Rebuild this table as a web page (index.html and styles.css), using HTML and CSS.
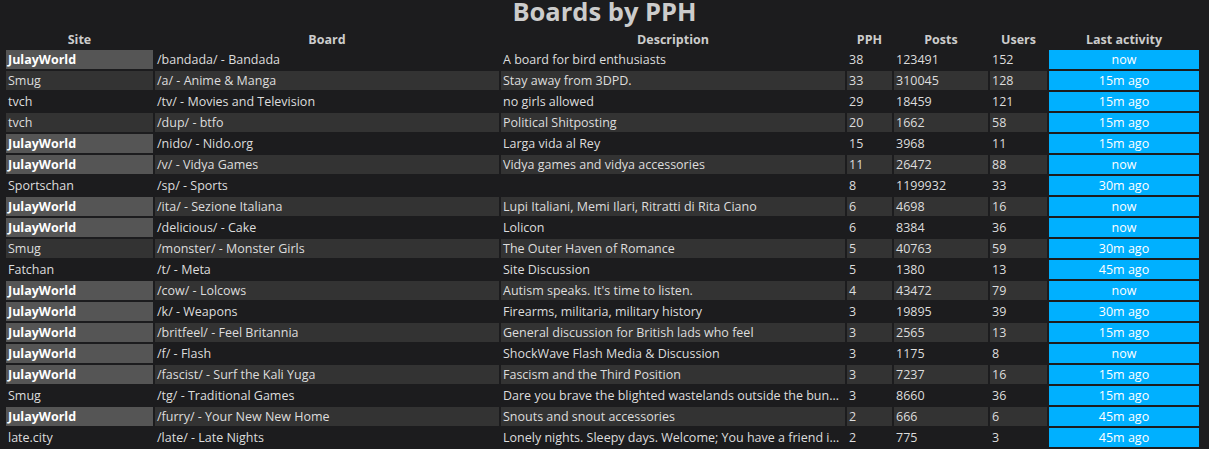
FILE: index.html
```html
<!DOCTYPE html>
<html>
<head>
<meta charset="utf-8">
<title>Boards by PPH</title>
<link rel="stylesheet" href="styles.css">
</head>
<body>
<h1 class="title">Boards by PPH</h1>
<table class="boards">
<colgroup>
<col class="c-site"><col class="c-board"><col class="c-desc"><col class="c-pph"><col class="c-posts"><col class="c-users"><col class="c-last">
</colgroup>
<thead>
<tr><th>Site</th><th>Board</th><th>Description</th><th>PPH</th><th>Posts</th><th>Users</th><th>Last activity</th></tr>
</thead>
<tbody>
<tr><td class="site julay">JulayWorld</td><td>/bandada/ - Bandada</td><td class="desc">A board for bird enthusiasts</td><td>38</td><td>123491</td><td>152</td><td class="last">now</td></tr>
<tr class="alt"><td class="site">Smug</td><td>/a/ - Anime &amp; Manga</td><td class="desc">Stay away from 3DPD.</td><td>33</td><td>310045</td><td>128</td><td class="last">15m ago</td></tr>
<tr><td class="site">tvch</td><td>/tv/ - Movies and Television</td><td class="desc">no girls allowed</td><td>29</td><td>18459</td><td>121</td><td class="last">15m ago</td></tr>
<tr class="alt"><td class="site">tvch</td><td>/dup/ - btfo</td><td class="desc">Political Shitposting</td><td>20</td><td>1662</td><td>58</td><td class="last">15m ago</td></tr>
<tr><td class="site julay">JulayWorld</td><td>/nido/ - Nido.org</td><td class="desc">Larga vida al Rey</td><td>15</td><td>3968</td><td>11</td><td class="last">15m ago</td></tr>
<tr class="alt"><td class="site julay">JulayWorld</td><td>/v/ - Vidya Games</td><td class="desc">Vidya games and vidya accessories</td><td>11</td><td>26472</td><td>88</td><td class="last">now</td></tr>
<tr><td class="site">Sportschan</td><td>/sp/ - Sports</td><td class="desc"></td><td>8</td><td>1199932</td><td>33</td><td class="last">30m ago</td></tr>
<tr class="alt"><td class="site julay">JulayWorld</td><td>/ita/ - Sezione Italiana</td><td class="desc">Lupi Italiani, Memi Ilari, Ritratti di Rita Ciano</td><td>6</td><td>4698</td><td>16</td><td class="last">now</td></tr>
<tr><td class="site julay">JulayWorld</td><td>/delicious/ - Cake</td><td class="desc">Lolicon</td><td>6</td><td>8384</td><td>36</td><td class="last">now</td></tr>
<tr class="alt"><td class="site">Smug</td><td>/monster/ - Monster Girls</td><td class="desc">The Outer Haven of Romance</td><td>5</td><td>40763</td><td>59</td><td class="last">30m ago</td></tr>
<tr><td class="site">Fatchan</td><td>/t/ - Meta</td><td class="desc">Site Discussion</td><td>5</td><td>1380</td><td>13</td><td class="last">45m ago</td></tr>
<tr class="alt"><td class="site julay">JulayWorld</td><td>/cow/ - Lolcows</td><td class="desc">Autism speaks. It's time to listen.</td><td>4</td><td>43472</td><td>79</td><td class="last">now</td></tr>
<tr><td class="site julay">JulayWorld</td><td>/k/ - Weapons</td><td class="desc">Firearms, militaria, military history</td><td>3</td><td>19895</td><td>39</td><td class="last">30m ago</td></tr>
<tr class="alt"><td class="site julay">JulayWorld</td><td>/britfeel/ - Feel Britannia</td><td class="desc">General discussion for British lads who feel</td><td>3</td><td>2565</td><td>13</td><td class="last">15m ago</td></tr>
<tr><td class="site julay">JulayWorld</td><td>/f/ - Flash</td><td class="desc">ShockWave Flash Media &amp; Discussion</td><td>3</td><td>1175</td><td>8</td><td class="last">now</td></tr>
<tr class="alt"><td class="site julay">JulayWorld</td><td>/fascist/ - Surf the Kali Yuga</td><td class="desc">Fascism and the Third Position</td><td>3</td><td>7237</td><td>16</td><td class="last">15m ago</td></tr>
<tr><td class="site">Smug</td><td>/tg/ - Traditional Games</td><td class="desc">Dare you brave the blighted wastelands outside the bunker? Roll for initiative.</td><td>3</td><td>8660</td><td>36</td><td class="last">15m ago</td></tr>
<tr class="alt"><td class="site julay">JulayWorld</td><td>/furry/ - Your New New Home</td><td class="desc">Snouts and snout accessories</td><td>2</td><td>666</td><td>6</td><td class="last">45m ago</td></tr>
<tr><td class="site">late.city</td><td>/late/ - Late Nights</td><td class="desc">Lonely nights. Sleepy days. Welcome; You have a friend in me.</td><td>2</td><td>775</td><td>3</td><td class="last">45m ago</td></tr>
<tr class="alt"><td class="site">Smug</td><td>/jp/ - Otaku Culture</td><td class="desc">Otaku culture</td><td>2</td><td>9021</td><td>40</td><td class="last">15m ago</td></tr>
</tbody>
</table>
</body>
</html>
```
FILE: styles.css
```css
html, body {
  margin: 0;
  padding: 0;
  background: #1c1c1e;
  color: #dddddd;
  font-family: "Open Sans", Lato, sans-serif;
  font-size: 12.5px;
  overflow: hidden;
}

.title {
  margin: 0;
  height: 29px;
  line-height: 22px;
  font-size: 25.5px;
  font-weight: bold;
  text-align: center;
  color: #cccccc;
}

.boards {
  margin-left: 4px;
  table-layout: fixed;
  width: 1197px;
  border-collapse: separate;
  border-spacing: 2px;
}

.c-site { width: 147px; }
.c-board { width: 344px; }
.c-desc { width: 344px; }
.c-pph { width: 45px; }
.c-posts { width: 94px; }
.c-users { width: 57px; }
.c-last { width: 150px; }

.boards th {
  height: 17px;
  padding: 0;
  font-weight: bold;
  color: #cccccc;
  text-align: center;
  line-height: 17px;
}

.boards td {
  height: 19px;
  padding: 0 2px;
  line-height: 19px;
  white-space: nowrap;
  overflow: hidden;
  text-overflow: ellipsis;
}

.boards tr.alt td {
  background: #333333;
}

.boards td.julay,
.boards tr.alt td.julay {
  background: #555555;
  font-weight: bold;
  color: #ffffff;
}

.boards td.last,
.boards tr.alt td.last {
  background: #00b0ff;
  color: #ffffff;
  text-align: center;
}
```
